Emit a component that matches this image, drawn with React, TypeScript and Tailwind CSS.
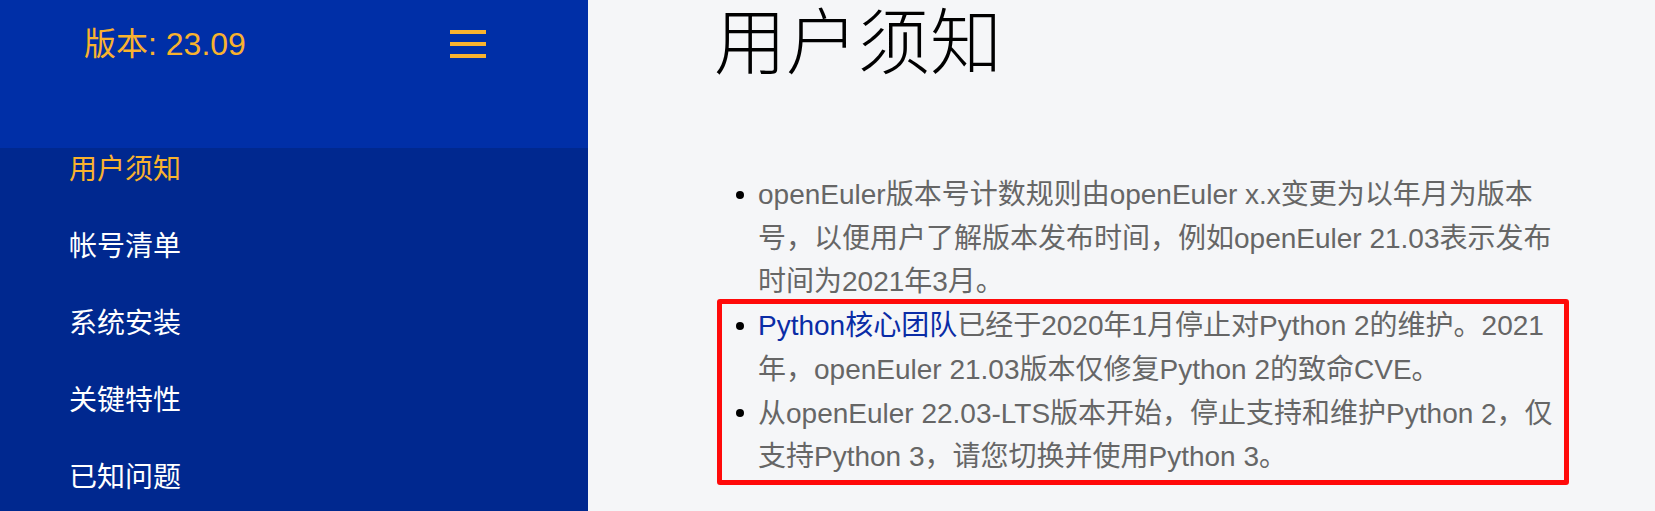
import React from "react";

const navItems = ["用户须知", "帐号清单", "系统安装", "关键特性", "已知问题"];

export default function App() {
  return (
    <div className="flex h-[511px] w-full overflow-hidden font-['Liberation_Sans','Noto_Sans_CJK_SC',sans-serif]">
      {/* 侧边栏 */}
      <aside className="w-[588px] shrink-0 flex flex-col bg-[#00288f]">
        <div className="h-[148px] bg-[#002fa7]">
          <div className="h-[88px] flex items-center justify-between pl-[84px] pr-[102px]">
            <span className="text-[32px] leading-none text-[#f9b22e]">版本: 23.09</span>
            <button className="w-9 flex flex-col gap-2">
              <span className="h-1 w-9 bg-[#f9b22e]" />
              <span className="h-1 w-9 bg-[#f9b22e]" />
              <span className="h-1 w-9 bg-[#f9b22e]" />
            </button>
          </div>
        </div>
        <ul className="flex flex-col gap-[41px] pt-1 pl-[69px]">
          {navItems.map((item, index) => (
            <li
              key={item}
              className={`text-[28px] leading-[36px] ${
                index === 0 ? "text-[#f9b22e]" : "text-white"
              }`}
            >
              {item}
            </li>
          ))}
        </ul>
      </aside>

      {/* 内容 */}
      <main className="flex-1 bg-[#f5f6f8] pl-[126px]">
        <h1 className="pt-[7px] text-[72px] leading-none font-light text-black">用户须知</h1>
        <div className="relative mt-[94px]">
          <ul className="flex flex-col text-[28px] leading-[43.7px] text-[#666]">
            <li className="flex">
              <div className="w-[44px] h-[43.7px] shrink-0 flex items-center pl-[22px]">
                <span className="w-2 h-2 rounded-full bg-black" />
              </div>
              <p className="w-[806px]">
                openEuler版本号计数规则由openEuler x.x变更为以年月为版本号，以便用户了解版本发布时间，例如openEuler 21.03表示发布时间为2021年3月。
              </p>
            </li>
            <li className="flex">
              <div className="w-[44px] h-[43.7px] shrink-0 flex items-center pl-[22px]">
                <span className="w-2 h-2 rounded-full bg-black" />
              </div>
              <p className="w-[806px]">
                <a className="text-[#0a2ca6]">Python核心团队</a>
                已经于2020年1月停止对Python 2的维护。2021年，openEuler 21.03版本仅修复Python 2的致命CVE。
              </p>
            </li>
            <li className="flex">
              <div className="w-[44px] h-[43.7px] shrink-0 flex items-center pl-[22px]">
                <span className="w-2 h-2 rounded-full bg-black" />
              </div>
              <p className="w-[806px]">
                从openEuler 22.03-LTS版本开始，停止支持和维护Python 2，仅支持Python 3，请您切换并使用Python 3。
              </p>
            </li>
          </ul>
          {/* 红框标注 */}
          <div className="absolute left-[3px] top-[126px] w-[852px] h-[186px] border-[5px] border-[#ff0a0a] rounded-[3px] pointer-events-none" />
        </div>
      </main>
    </div>
  );
}
